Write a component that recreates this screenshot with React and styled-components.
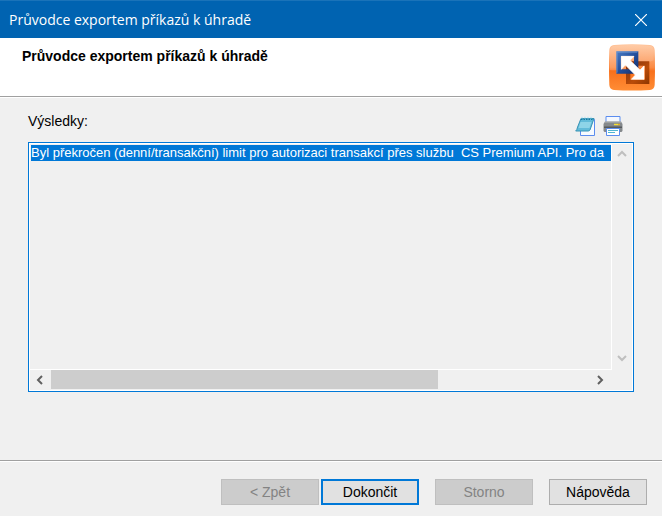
import React, { useEffect, useRef } from "react";
import styled, { createGlobalStyle } from "styled-components";

const GlobalStyle = createGlobalStyle`
  * { box-sizing: border-box; }
  body {
    margin: 0;
    background: #f0f0f0;
    color: #000;
    font: 13px/16px "Liberation Sans", Arial, sans-serif;
  }
`;

const Dialog = styled.main`
  display: flex;
  flex-direction: column;
  min-height: 100vh;
`;

const TitleBar = styled.header`
  display: flex;
  align-items: center;
  justify-content: space-between;
  height: 38px;
  padding: 0 8px 0 9px;
  background: #0063b1;
  border-top: 1px solid #1a73b9;
  color: #fff;
  font: 14px/20px "Open Sans", "Noto Sans", sans-serif;
`;

const IconButton = styled.button`
  display: grid;
  place-items: center;
  width: ${(p) => p.$size}px;
  height: ${(p) => p.$size}px;
  padding: 0;
  border: 0;
  background: none;
  color: inherit;
`;

const Banner = styled.section`
  display: flex;
  justify-content: space-between;
  align-items: flex-start;
  height: 59px;
  padding: 6px 7px 5px 22px;
  background: #fff;
  border-bottom: 1px solid #a0a0a0;
  box-shadow: 0 1px 0 #fff;
`;

const Heading = styled.h1`
  margin: 4px 0 0;
  font-size: 14px;
  line-height: 16px;
  font-weight: bold;
`;

const Content = styled.section`
  flex: 1;
  display: flex;
  flex-direction: column;
  padding: 16px 28px 68px;
`;

const Toolbar = styled.div`
  display: flex;
  justify-content: space-between;
  height: 29px;
  padding-right: 11px;
`;

const Label = styled.label`
  font-size: 14px;
  line-height: 16px;
`;

const Tools = styled.div`
  display: flex;
  gap: 8px;
  padding-top: 3px;
`;

const ResultBox = styled.div`
  flex: 1;
  display: grid;
  grid-template-columns: 1fr 20px;
  grid-template-rows: 1fr 20px;
  min-height: 120px;
  border: 1px solid #0078d7;
  box-shadow: inset 0 0 0 1px #fff;
  padding: 1px;
`;

const ResultText = styled.textarea`
  display: block;
  width: 100%;
  height: 100%;
  margin: 0;
  padding: 1px 0 0 1px;
  border: 0;
  border-right: 1px solid #fff;
  border-bottom: 1px solid #fff;
  border-radius: 0;
  outline: 0;
  resize: none;
  overflow: hidden;
  white-space: pre;
  background: transparent;
  color: #000;
  font: 13px/16px "Liberation Sans", Arial, sans-serif;
  &::selection { background: #0078d7; color: #fff; }
`;

const VerticalBar = styled.div`
  display: flex;
  flex-direction: column;
  justify-content: space-between;
  padding-bottom: 2px;
  color: #bfbfbf;
`;

const HorizontalBar = styled.div`
  display: flex;
  align-items: center;
  gap: 1px;
  padding-right: 2px;
  color: #606060;
`;

const Track = styled.div`
  flex: 1;
  height: 19px;
  align-self: flex-start;
`;

const Thumb = styled.div`
  width: 72%;
  height: 100%;
  background: #cdcdcd;
`;

const Footer = styled.footer`
  display: flex;
  justify-content: flex-end;
  gap: 16px;
  height: 56px;
  padding: 18px 15px 11px;
  border-top: 1px solid #a0a0a0;
  box-shadow: inset 0 1px 0 #fff;
`;

const Pair = styled.div`
  display: flex;
  gap: 2px;
`;

const PushButton = styled.button`
  width: 98px;
  height: 26px;
  padding: 0;
  border: ${(p) => (p.$primary ? "2px solid #0078d7" : "1px solid #adadad")};
  border-radius: 0;
  background: #e1e1e1;
  color: #000;
  font: 14px/16px "Liberation Sans", Arial, sans-serif;
  &:disabled {
    background: #cccccc;
    border-color: #bfbfbf;
    color: #838383;
  }
`;

const chevrons = {
  up: "M1 7 L5 3 L9 7",
  down: "M1 3 L5 7 L9 3",
  left: "M7 1 L3 5 L7 9",
  right: "M3 1 L7 5 L3 9",
};

const Chevron = ({ direction }) => (
  <svg width="10" height="10" viewBox="0 0 10 10" fill="none" stroke="currentColor" strokeWidth="2" aria-hidden="true">
    <path d={chevrons[direction]} />
  </svg>
);

const ExportLogo = () => (
  <svg width="46" height="47" viewBox="57 131 138 141" aria-hidden="true">
    <defs>
      <linearGradient id="tile" x1="0" y1="0" x2="0" y2="1">
        <stop offset="0" stopColor="#ffc49a" />
        <stop offset="0.5" stopColor="#fb8b45" />
        <stop offset="0.58" stopColor="#f8701c" />
        <stop offset="1" stopColor="#ff8d35" />
      </linearGradient>
      <linearGradient id="blueFrame" x1="0" y1="0" x2="1" y2="1">
        <stop offset="0" stopColor="#4a7cc4" />
        <stop offset="0.5" stopColor="#244f9c" />
        <stop offset="1" stopColor="#152e68" />
      </linearGradient>
      <linearGradient id="brownFrame" x1="0" y1="0" x2="1" y2="1">
        <stop offset="0" stopColor="#7d3010" />
        <stop offset="0.6" stopColor="#b94b08" />
        <stop offset="1" stopColor="#8c3600" />
      </linearGradient>
    </defs>
    <path d="M72 134 Q126 129 180 134 Q193 135 194 149 Q196 202 194 254 Q193 268 180 269 Q126 272 72 269 Q59 268 58 254 Q56 202 58 149 Q59 135 72 134Z" fill="url(#tile)" />
    <path d="M60 209 Q110 214 191 180 L192 150 Q191 138 179 136 Q126 132 73 136 Q61 138 60 150Z" fill="#fff" opacity="0.15" />
    <path d="M108 183 H178 V251 H108Z M121 196 V238 H165 V196Z" fill="url(#brownFrame)" fillRule="evenodd" />
    <path d="M79 153 H145 V220 H79Z M93 167 V207 H132 V167Z" fill="url(#blueFrame)" fillRule="evenodd" />
    <path d="M79 153 H145 L141 157 H83 V216 L79 220Z" fill="#82a9e0" opacity="0.5" />
    <path d="M94 168 H132 L120 180 L150 209 L162 197 V237 H124 L136 224 L106 194 L94 207Z" fill="#fff" stroke="#fff" strokeWidth="2" />
  </svg>
);

const NotesIcon = () => (
  <svg width="20" height="20" viewBox="0 0 20 20" aria-hidden="true">
    <path d="M5.5 3.5 H19.5 V19.5 H5.5Z" fill="#f7fbff" stroke="#5b8def" />
    <path d="M6 2.5 H19 L15 14 Q14.5 15 13 15 H.7 Q2 14 2.6 11Z" fill="#62bbd9" stroke="#3793b5" />
    <path d="M5.5 6 H16.5 L14.5 12 H3.5Z" fill="#8ed4e8" />
    <path d="M6 3.5 H18" stroke="#16799e" strokeDasharray="1.5 1" />
    <path d="M7 2.5 V.8 M10 2.5 V.8 M13 2.5 V.8 M16 2.5 V.8" stroke="#a5dff0" />
  </svg>
);

const PrinterIcon = () => (
  <svg width="20" height="20" viewBox="0 0 20 20" aria-hidden="true">
    <path d="M3 .5 H17 V8 H3Z" fill="#f4f8ff" stroke="#5b8def" />
    <path d="M2 5.5 H18 L19.5 8 V15 L18.5 16 H1.5 L.5 15 V8Z" fill="#85898c" />
    <path d="M2 6 H18" stroke="#b4b7b9" />
    <path d="M1 10.5 H19 V12 H1Z" fill="#55595d" />
    <path d="M11 8.5 H15" stroke="#f5df35" strokeWidth="1.4" />
    <path d="M15 8.5 H17" stroke="#e2ad22" strokeWidth="1.4" />
    <path d="M3.5 12.5 H16.5 V19.5 H3.5Z" fill="#fff" stroke="#5b8def" />
    <path d="M5 14.5 H15 M5 16.5 H12" stroke="#50b6d2" />
  </svg>
);

const message =
  "Byl překročen (denní/transakční) limit pro autorizaci transakcí přes službu  CS Premium API. Pro da";

export default function App() {
  const results = useRef(null);

  useEffect(() => {
    results.current.focus();
    results.current.select();
  }, []);

  return (
    <>
      <GlobalStyle />
      <Dialog>
        <TitleBar>
          <span>Průvodce exportem příkazů k úhradě</span>
          <IconButton type="button" $size={26} aria-label="Zavřít">
            <svg width="12" height="12" viewBox="0 0 12 12" stroke="currentColor" strokeWidth="1.2" aria-hidden="true">
              <path d="M0 0 L12 12 M12 0 L0 12" />
            </svg>
          </IconButton>
        </TitleBar>
        <Banner>
          <Heading>Průvodce exportem příkazů k úhradě</Heading>
          <ExportLogo />
        </Banner>
        <Content>
          <Toolbar>
            <Label htmlFor="results">Výsledky:</Label>
            <Tools>
              <IconButton type="button" $size={20} aria-label="Poznámkový blok"><NotesIcon /></IconButton>
              <IconButton type="button" $size={20} aria-label="Tisk"><PrinterIcon /></IconButton>
            </Tools>
          </Toolbar>
          <ResultBox>
            <ResultText id="results" ref={results} readOnly wrap="off" spellCheck={false} value={`${message}  `} />
            <VerticalBar>
              <IconButton type="button" $size={20} aria-label="Nahoru"><Chevron direction="up" /></IconButton>
              <IconButton type="button" $size={20} aria-label="Dolů"><Chevron direction="down" /></IconButton>
            </VerticalBar>
            <HorizontalBar>
              <IconButton type="button" $size={20} aria-label="Vlevo"><Chevron direction="left" /></IconButton>
              <Track><Thumb /></Track>
              <IconButton type="button" $size={20} aria-label="Vpravo"><Chevron direction="right" /></IconButton>
            </HorizontalBar>
          </ResultBox>
        </Content>
        <Footer>
          <Pair>
            <PushButton type="button" disabled>&lt; Zpět</PushButton>
            <PushButton type="button" $primary>Dokončit</PushButton>
          </Pair>
          <PushButton type="button" disabled>Storno</PushButton>
          <PushButton type="button">Nápověda</PushButton>
        </Footer>
      </Dialog>
    </>
  );
}
